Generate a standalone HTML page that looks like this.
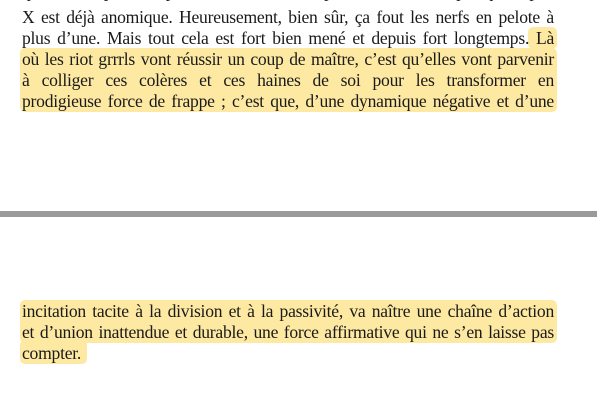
<!DOCTYPE html>
<html><head><meta charset="utf-8"><style>
html,body{margin:0;padding:0;background:#fff;width:597px;height:405px;overflow:hidden;position:relative}
.l{position:absolute;left:22px;width:532px;font:17.6px/21px "Liberation Serif",serif;color:#1a1a1a;text-align:justify;text-align-last:justify;white-space:nowrap;z-index:2;letter-spacing:-0.25px}
.n{text-align-last:left}
.h{position:absolute;background:#fde9a2;border-radius:5px;z-index:1}
.bar{position:absolute;left:0;top:211px;width:597px;height:6px;background:#9a9a9a}
</style></head><body>
<div class="l" style="top:-19px">qu'un simple mépris, mais ce mépris universel, puisque peu</div>
<div class="l" style="top:7px">X est déjà anomique. Heureusement, bien sûr, ça fout les nerfs en pelote à</div>
<div class="l" style="top:28px">plus d’une. Mais tout cela est fort bien mené et depuis fort longtemps. Là</div>
<div class="l" style="top:49px">où les riot grrrls vont réussir un coup de maître, c’est qu’elles vont parvenir</div>
<div class="l" style="top:70px">à colliger ces colères et ces haines de soi pour les transformer en</div>
<div class="l" style="top:91px">prodigieuse force de frappe ; c’est que, d’une dynamique négative et d’une</div>
<div class="h" style="left:528px;top:27px;width:29px;height:22px"></div>
<div class="h" style="left:20px;top:48px;width:537px;height:64px"></div>
<div class="bar"></div>
<div class="l" style="top:301px">incitation tacite à la division et à la passivité, va naître une chaîne d’action</div>
<div class="l" style="top:322px">et d’union inattendue et durable, une force affirmative qui ne s’en laisse pas</div>
<div class="l n" style="top:343px">compter.</div>
<div class="h" style="left:20px;top:300px;width:537px;height:43px"></div>
<div class="h" style="left:20px;top:340px;width:67px;height:24px"></div>
</body></html>
